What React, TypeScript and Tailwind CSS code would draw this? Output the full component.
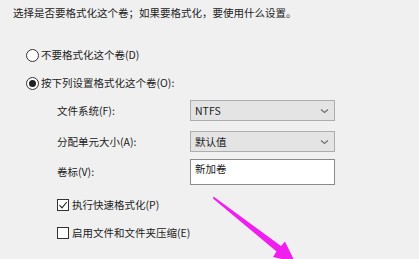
import React from "react";

const font = { fontFamily: '"Noto Sans CJK SC", "Noto Sans", sans-serif' };

function Chevron() {
  return (
    <svg width="9" height="6" viewBox="0 0 9 6" className="shrink-0">
      <path d="M1 1.5 L4.5 4.5 L8 1.5" fill="none" stroke="#6b6b6b" strokeWidth="1.1" />
    </svg>
  );
}

function Radio({ checked, label }: { checked?: boolean; label: string }) {
  return (
    <div className="flex items-center h-[14px] ml-[26px]">
      <div className="w-[13px] h-[13px] rounded-full border border-[#333] bg-white flex items-center justify-center shrink-0">
        {checked && <div className="w-[7px] h-[7px] rounded-full bg-[#222]" />}
      </div>
      <span className="ml-[2px]">{label}</span>
    </div>
  );
}

function Check({ checked, label }: { checked?: boolean; label: string }) {
  return (
    <div className="flex items-center h-[12px] ml-[57px]">
      <div className="w-[12px] h-[12px] border border-[#333] bg-white flex items-center justify-center shrink-0">
        {checked && (
          <svg width="10" height="10" viewBox="0 0 10 10">
            <path d="M1.5 5.2 L4 7.8 L8.8 2" fill="none" stroke="#222" strokeWidth="1.1" />
          </svg>
        )}
      </div>
      <span className="ml-[3px]">{label}</span>
    </div>
  );
}

export default function App() {
  return (
    <div
      className="relative w-[419px] h-[259px] overflow-hidden bg-[#f0f0f0] text-[#222] text-[10.5px] leading-[12px]"
      style={font}
    >
      <div className="pl-[13px] pt-[7px]">选择是否要格式化这个卷；如果要格式化，要使用什么设置。</div>

      <div className="mt-[29px]">
        <Radio label="不要格式化这个卷(D)" />
      </div>
      <div className="mt-[14px]">
        <Radio checked label="按下列设置格式化这个卷(O):" />
      </div>

      <div className="ml-[57px] mt-[10px] flex flex-col">
        <div className="flex items-center h-[21px]">
          <span className="w-[133px]">文件系统(F):</span>
          <div className="w-[145px] h-[21px] bg-[#e4e4e4] border border-[#adadad] flex items-center justify-between pl-[4px] pr-[5px]">
            <span>NTFS</span>
            <Chevron />
          </div>
        </div>
        <div className="flex items-center h-[21px] mt-[10px]">
          <span className="w-[133px]">分配单元大小(A):</span>
          <div className="w-[145px] h-[21px] bg-[#e4e4e4] border border-[#adadad] flex items-center justify-between pl-[4px] pr-[5px]">
            <span>默认值</span>
            <Chevron />
          </div>
        </div>
        <div className="flex items-center h-[26px] mt-[7px]">
          <span className="w-[133px]">卷标(V):</span>
          <div className="w-[145px] h-[26px] bg-white border border-[#8a8a8a] flex items-start pl-[4px] pt-[3px]">
            <span>新加卷</span>
          </div>
        </div>
      </div>

      <div className="mt-[14px]">
        <Check checked label="执行快速格式化(P)" />
      </div>
      <div className="mt-[16px]">
        <Check label="启用文件和文件夹压缩(E)" />
      </div>

      <svg className="absolute left-0 top-0" width="419" height="259" viewBox="0 0 419 259">
        <polygon
          points="213.5,196.5 281,246 285,241.5 295,262 273,257 276.5,251.5 213,198.5"
          fill="#f01ff0"
        />
      </svg>
    </div>
  );
}
